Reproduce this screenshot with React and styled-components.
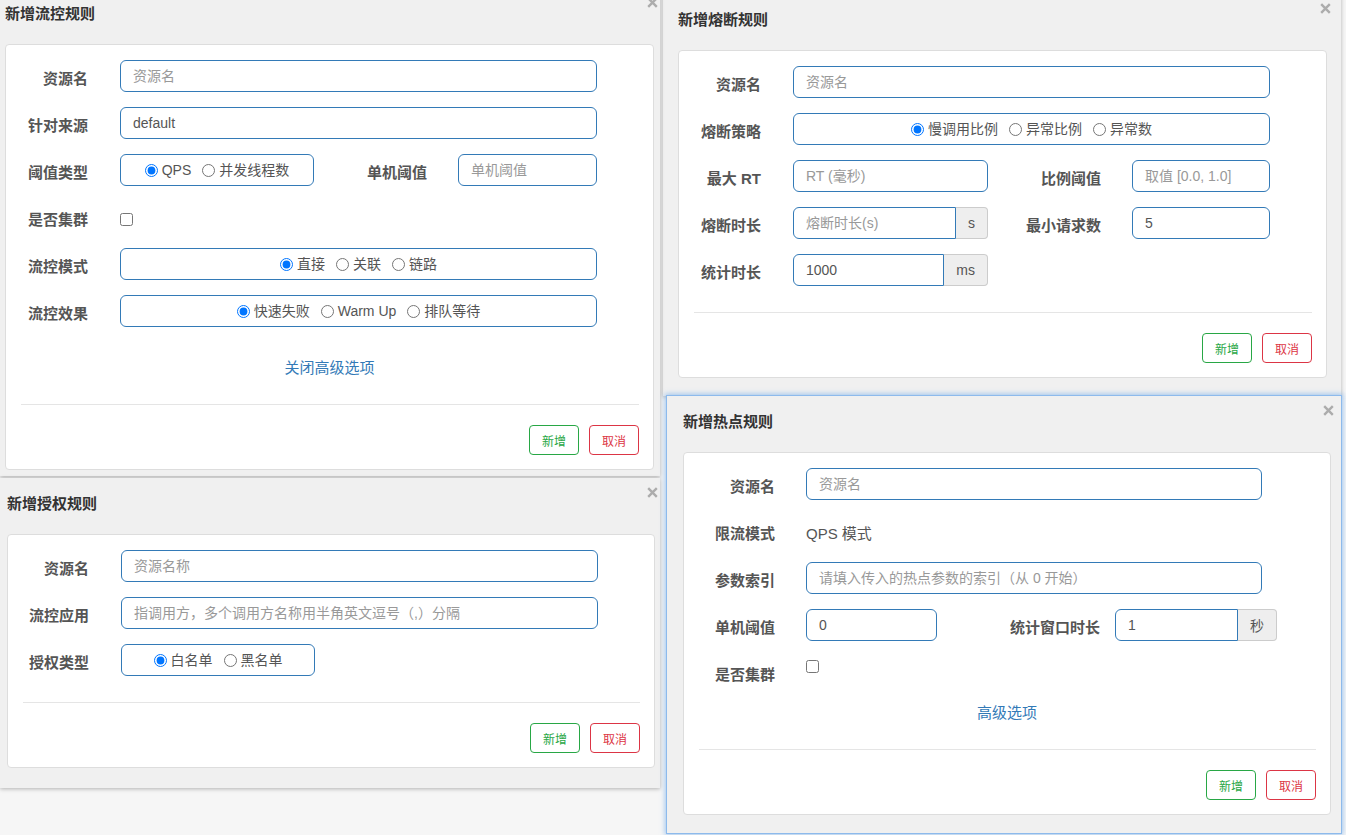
import React from "react";
import styled, { createGlobalStyle } from "styled-components";

const GlobalStyle = createGlobalStyle`
  html, body { margin: 0; padding: 0; }
  body {
    width: 1346px;
    height: 835px;
    overflow: hidden;
    background: #f7f7f7;
    font-family: "Liberation Sans", "Noto Sans CJK SC", sans-serif;
    color: #555;
  }
`;

const FONT = `"Liberation Sans", "Noto Sans CJK SC", sans-serif`;

const Desktop = styled.div`
  position: relative;
  width: 1346px;
  height: 835px;
  overflow: hidden;
  background: #f6f6f6;
`;

const Dialog = styled.section`
  position: absolute;
  left: ${(p) => p.$x}px;
  top: ${(p) => p.$y}px;
  width: ${(p) => p.$w}px;
  height: ${(p) => p.$h}px;
  box-sizing: border-box;
  padding-left: ${(p) => p.$pad}px;
  background: #f0f0f0;
  border: ${(p) => (p.$focused ? "1px solid rgba(130,180,235,0.9)" : "none")};
  box-shadow: ${(p) =>
    p.$focused
      ? "0 0 5px 1px rgba(102,165,233,0.6)"
      : "0 1px 4px rgba(0,0,0,0.28)"};
`;

const Header = styled.header`
  height: 36px;
  padding-top: 15px;
  box-sizing: border-box;
`;

const Title = styled.h4`
  margin: 0;
  font-size: 15px;
  line-height: 21px;
  font-weight: 700;
  color: #333;
`;

const Close = styled.button`
  position: absolute;
  top: ${(p) => p.$t}px;
  right: ${(p) => p.$r}px;
  width: 11px;
  height: 11px;
  border: 0;
  background: none;
  padding: 0;
  display: block;
  cursor: pointer;
  svg {
    display: block;
  }
`;

const Card = styled.div`
  margin-top: 20px;
  width: ${(p) => p.$w}px;
  box-sizing: border-box;
  background: #fff;
  border: 1px solid #ddd;
  border-radius: 4px;
  padding: 15px 0 14px;
`;

const Form = styled.div`
  display: flex;
  flex-direction: column;
  gap: 15px;
`;

const Row = styled.div`
  display: flex;
  align-items: flex-start;
  min-height: 32px;
`;

const Label = styled.label`
  flex-shrink: 0;
  width: ${(p) => p.$w}px;
  margin-right: ${(p) => p.$gap}px;
  box-sizing: border-box;
  padding-top: 8px;
  text-align: right;
  font-size: 15px;
  line-height: 21px;
  font-weight: 700;
  color: #555;
  white-space: nowrap;
`;

const TextInput = styled.input`
  box-sizing: border-box;
  width: ${(p) => (p.$w ? `${p.$w}px` : "100%")};
  flex: ${(p) => (p.$grow ? "1" : "none")};
  min-width: 0;
  height: 32px;
  margin: 0;
  border: 1px solid #337ab7;
  border-radius: ${(p) => (p.$joined ? "6px 0 0 6px" : "6px")};
  padding: 0 12px;
  font: 14px ${FONT};
  color: #555;
  background: #fff;
  outline: none;
  &::placeholder {
    color: #999;
  }
`;

const InputGroup = styled.div`
  display: flex;
  width: ${(p) => p.$w}px;
  height: 32px;
`;

const Addon = styled.span`
  display: flex;
  align-items: center;
  justify-content: center;
  box-sizing: border-box;
  height: 32px;
  padding: 0 12px;
  background: #eee;
  border: 1px solid #ccc;
  border-left: 0;
  border-radius: 0 4px 4px 0;
  font-size: 14px;
  color: #555;
`;

const RadioBox = styled.div`
  box-sizing: border-box;
  width: ${(p) => p.$w}px;
  height: 32px;
  border: 1px solid #337ab7;
  border-radius: 6px;
  display: flex;
  align-items: center;
  justify-content: center;
  gap: 11px;
`;

const RadioOption = styled.label`
  display: inline-flex;
  align-items: center;
  gap: 4px;
  font-size: 14px;
  line-height: 20px;
  color: #555;
  white-space: nowrap;
`;

const Radio = styled.input.attrs({ type: "radio" })`
  margin: 0;
  width: 13px;
  height: 13px;
`;

const Checkbox = styled.input.attrs({ type: "checkbox" })`
  margin: ${(p) => p.$top}px 0 0;
  width: 13px;
  height: 13px;
`;

const StaticText = styled.span`
  padding-top: 8px;
  font-size: 15px;
  line-height: 21px;
  color: #555;
`;

const LinkRow = styled.div`
  margin-top: ${(p) => p.$mt}px;
  text-align: center;
  font-size: 15px;
  line-height: 20px;
`;

const Link = styled.a`
  color: #337ab7;
  text-decoration: none;
  cursor: pointer;
`;

const Divider = styled.hr`
  height: 1px;
  border: 0;
  background: #e5e5e5;
  margin: 26px 14px 0 15px;
`;

const Footer = styled.div`
  display: flex;
  justify-content: flex-end;
  gap: 10px;
  padding: 20px 14px 0 0;
`;

const Button = styled.button`
  width: 50px;
  height: 30px;
  box-sizing: border-box;
  padding: 0;
  background: #fff;
  border: 1px solid ${(p) => (p.$danger ? "#dc3545" : "#28a745")};
  color: ${(p) => (p.$danger ? "#dc3545" : "#28a745")};
  border-radius: 4px;
  font: 12px ${FONT};
  cursor: pointer;
`;

function CloseIcon() {
  return (
    <svg width="11" height="11" viewBox="0 0 11 11" aria-hidden="true">
      <path d="M1.2 1.2 L9.8 9.8 M9.8 1.2 L1.2 9.8" stroke="#acacac" strokeWidth="2.4" strokeLinecap="butt" />
    </svg>
  );
}

function DialogShell({ x, y, w, h, pad, cardW, closeR, closeT = 9, focused, title, children }) {
  return (
    <Dialog $x={x} $y={y} $w={w} $h={h} $pad={pad} $focused={focused}>
      <Header>
        <Title>{title}</Title>
      </Header>
      <Close $r={closeR} $t={closeT} aria-label="关闭">
        <CloseIcon />
      </Close>
      <Card $w={cardW}>
        {children}
        <Divider />
        <Footer>
          <Button>新增</Button>
          <Button $danger>取消</Button>
        </Footer>
      </Card>
    </Dialog>
  );
}

function FlowDialog() {
  return (
    <DialogShell x={0} y={-12} w={660} h={488} pad={5} cardW={649} closeR={2} title="新增流控规则">
      <Form>
        <Row>
          <Label $w={82} $gap={32}>资源名</Label>
          <TextInput $w={477} placeholder="资源名" />
        </Row>
        <Row>
          <Label $w={82} $gap={32}>针对来源</Label>
          <TextInput $w={477} defaultValue="default" />
        </Row>
        <Row>
          <Label $w={82} $gap={32}>阈值类型</Label>
          <RadioBox $w={194}>
            <RadioOption><Radio name="grade" defaultChecked />QPS</RadioOption>
            <RadioOption><Radio name="grade" />并发线程数</RadioOption>
          </RadioBox>
          <Label $w={113} $gap={31}>单机阈值</Label>
          <TextInput $w={139} placeholder="单机阈值" />
        </Row>
        <Row>
          <Label $w={82} $gap={32}>是否集群</Label>
          <Checkbox $top={12} />
        </Row>
        <Row>
          <Label $w={82} $gap={32}>流控模式</Label>
          <RadioBox $w={477}>
            <RadioOption><Radio name="strategy" defaultChecked />直接</RadioOption>
            <RadioOption><Radio name="strategy" />关联</RadioOption>
            <RadioOption><Radio name="strategy" />链路</RadioOption>
          </RadioBox>
        </Row>
        <Row>
          <Label $w={82} $gap={32}>流控效果</Label>
          <RadioBox $w={477}>
            <RadioOption><Radio name="behavior" defaultChecked />快速失败</RadioOption>
            <RadioOption><Radio name="behavior" />Warm Up</RadioOption>
            <RadioOption><Radio name="behavior" />排队等待</RadioOption>
          </RadioBox>
        </Row>
      </Form>
      <LinkRow $mt={31}>
        <Link>关闭高级选项</Link>
      </LinkRow>
    </DialogShell>
  );
}

function AuthDialog() {
  return (
    <DialogShell x={0} y={478} w={660} h={310} pad={7} cardW={648} closeR={2} title="新增授权规则">
      <Form>
        <Row>
          <Label $w={81} $gap={32}>资源名</Label>
          <TextInput $w={477} placeholder="资源名称" />
        </Row>
        <Row>
          <Label $w={81} $gap={32}>流控应用</Label>
          <TextInput $w={477} placeholder="指调用方，多个调用方名称用半角英文逗号（,）分隔" />
        </Row>
        <Row>
          <Label $w={81} $gap={32}>授权类型</Label>
          <RadioBox $w={194}>
            <RadioOption><Radio name="auth" defaultChecked />白名单</RadioOption>
            <RadioOption><Radio name="auth" />黑名单</RadioOption>
          </RadioBox>
        </Row>
      </Form>
    </DialogShell>
  );
}

function DegradeDialog() {
  return (
    <DialogShell x={663} y={-6} w={678} h={402} pad={15} cardW={649} closeR={10} title="新增熔断规则">
      <Form>
        <Row>
          <Label $w={82} $gap={32}>资源名</Label>
          <TextInput $w={477} placeholder="资源名" />
        </Row>
        <Row>
          <Label $w={82} $gap={32}>熔断策略</Label>
          <RadioBox $w={477}>
            <RadioOption><Radio name="degrade" defaultChecked />慢调用比例</RadioOption>
            <RadioOption><Radio name="degrade" />异常比例</RadioOption>
            <RadioOption><Radio name="degrade" />异常数</RadioOption>
          </RadioBox>
        </Row>
        <Row>
          <Label $w={82} $gap={32}>最大 RT</Label>
          <TextInput $w={195} placeholder="RT (毫秒)" />
          <Label $w={113} $gap={31}>比例阈值</Label>
          <TextInput $w={138} placeholder="取值 [0.0, 1.0]" />
        </Row>
        <Row>
          <Label $w={82} $gap={32}>熔断时长</Label>
          <InputGroup $w={195}>
            <TextInput $grow $joined placeholder="熔断时长(s)" />
            <Addon>s</Addon>
          </InputGroup>
          <Label $w={113} $gap={31}>最小请求数</Label>
          <TextInput $w={138} defaultValue="5" />
        </Row>
        <Row>
          <Label $w={82} $gap={32}>统计时长</Label>
          <InputGroup $w={195}>
            <TextInput $grow $joined defaultValue="1000" />
            <Addon>ms</Addon>
          </InputGroup>
        </Row>
      </Form>
    </DialogShell>
  );
}

function HotDialog() {
  return (
    <DialogShell x={666} y={395} w={676} h={439} pad={16} cardW={648} closeR={7} closeT={9} focused title="新增热点规则">
      <Form>
        <Row>
          <Label $w={91} $gap={31}>资源名</Label>
          <TextInput $w={456} placeholder="资源名" />
        </Row>
        <Row>
          <Label $w={91} $gap={31}>限流模式</Label>
          <StaticText>QPS 模式</StaticText>
        </Row>
        <Row>
          <Label $w={91} $gap={31}>参数索引</Label>
          <TextInput $w={456} placeholder="请填入传入的热点参数的索引（从 0 开始）" />
        </Row>
        <Row>
          <Label $w={91} $gap={31}>单机阈值</Label>
          <TextInput $w={131} defaultValue="0" />
          <Label $w={163} $gap={15}>统计窗口时长</Label>
          <InputGroup $w={162}>
            <TextInput $grow $joined defaultValue="1" />
            <Addon>秒</Addon>
          </InputGroup>
        </Row>
        <Row>
          <Label $w={91} $gap={31}>是否集群</Label>
          <Checkbox $top={4} />
        </Row>
      </Form>
      <LinkRow $mt={15}>
        <Link>高级选项</Link>
      </LinkRow>
    </DialogShell>
  );
}

export default function App() {
  return (
    <>
      <GlobalStyle />
      <Desktop>
        <DegradeDialog />
        <FlowDialog />
        <AuthDialog />
        <HotDialog />
      </Desktop>
    </>
  );
}
